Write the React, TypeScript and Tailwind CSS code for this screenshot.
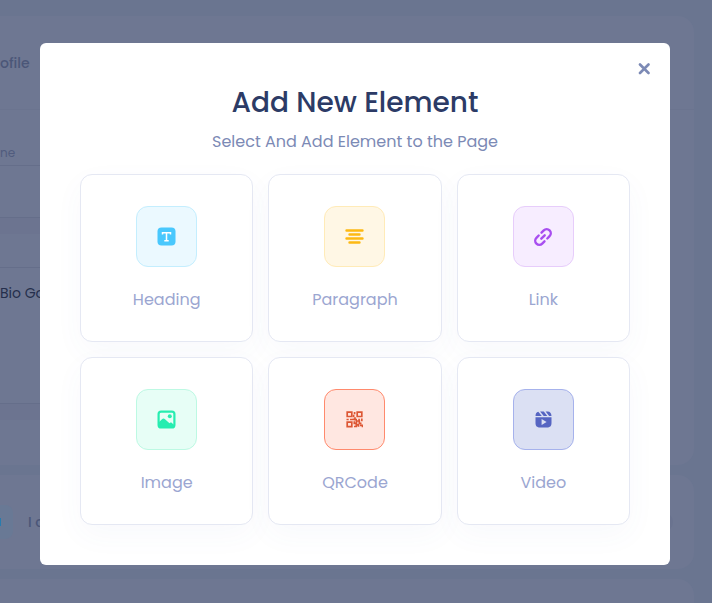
import type { ReactNode } from "react";

type Element = { label: string; box: string; icon: ReactNode };

const elements: Element[] = [
  {
    label: "Heading",
    box: "border-[#c4eefe] bg-[#ebf9ff] text-[#49c8fd]",
    icon: (
      <svg width="19" height="19" viewBox="0 0 19 19" aria-hidden="true">
        <rect x="0.5" y="0.5" width="18" height="18" rx="4" fill="currentColor" />
        <path d="M5.5 7.5V5.7h8v1.8M9.5 5.7v7.8M7.3 13.7h4.4" fill="none" stroke="#fff" strokeWidth="1.5" />
      </svg>
    ),
  },
  {
    label: "Paragraph",
    box: "border-[#ffebb8] bg-[#fff7e5] text-[#fdb913]",
    icon: (
      <svg width="19" height="19" viewBox="0 0 19 19" aria-hidden="true">
        <path d="M1.5 3.5h16M4.5 7.5h10M1.5 11.5h16M4.5 15.5h10" fill="none" stroke="currentColor" strokeWidth="2.4" strokeLinecap="round" />
      </svg>
    ),
  },
  {
    label: "Link",
    box: "border-[#e7cdfb] bg-[#f7edff] text-[#a84ef0]",
    icon: (
      <svg width="20" height="20" viewBox="0 0 20 20" aria-hidden="true">
        <g fill="none" stroke="currentColor" strokeWidth="2.4" strokeLinecap="round" transform="rotate(-45 10 10)">
          <path d="M8 5.9H4.8a4.1 4.1 0 0 0 0 8.2H8M12 5.9h3.2a4.1 4.1 0 0 1 0 8.2H12M7.6 10h4.8" />
        </g>
      </svg>
    ),
  },
  {
    label: "Image",
    box: "border-[#bdf9e3] bg-[#e7fef6] text-[#26edb0]",
    icon: (
      <svg width="19" height="19" viewBox="0 0 19 19" aria-hidden="true">
        <rect x="1.6" y="1.6" width="15.8" height="15.8" rx="2.5" fill="none" stroke="currentColor" strokeWidth="2.2" />
        <circle cx="12.8" cy="6.2" r="2" fill="currentColor" />
        <path d="M1.5 12.5 5 9.2q1.5-1.3 3 0l4.5 4 1.5-1 3.5 3v1.5l-1 1H2.5l-1-1z" fill="currentColor" />
      </svg>
    ),
  },
  {
    label: "QRCode",
    box: "border-[#ff8a6d] bg-[#ffe7e1] text-[#dd5734]",
    icon: (
      <svg width="17" height="17" viewBox="0 0 17 17" aria-hidden="true">
        <g fill="none" stroke="currentColor" strokeWidth="1.7">
          <path d="M1.2 1.2h4.6v4.3H1.2zM11.2 1.2h4.6v4.3h-4.6zM1.2 11.2h4.6v4.5H1.2z" />
          <path d="M8.6 1v2.3M7.6 3.8v2.5M0.5 8.5h2.2M4 8.5h3.5v-1M9 6.2v2.4h2M12.3 8.5h1.6M15.8 7.5v2.7M8.3 10.2v2.2h2.2V10h2.8v2.4h2.2M8 15.5h2.3v-1.6h2.2v1.8M14 14.3h2.5v2" />
        </g>
      </svg>
    ),
  },
  {
    label: "Video",
    box: "border-[#a6b2ec] bg-[#dbe0f3] text-[#5665c2]",
    icon: (
      <svg width="17" height="17" viewBox="0 0 17 17" aria-hidden="true">
        <path d="M0.5 4.9C.6 2.2 1.5 1 3.3.7l3.5 4.2zM5.1.5h3.7l3.5 4.4H8.7zM10.6.5h2.1c2.4.1 3.6 1.6 3.8 4.4h-2.4z" fill="currentColor" />
        <path fillRule="evenodd" d="M.5 6.2h16v5.6c0 3.4-1.4 4.7-4.7 4.7H5.2C1.9 16.5.5 15.2.5 11.8zM6.6 8v6l5-3z" fill="currentColor" />
      </svg>
    ),
  },
];

function PageBehind() {
  return (
    <div aria-hidden="true" className="h-screen overflow-hidden bg-[#6a7590] pt-4 pr-[18px] text-sm">
      <section className="mb-2.5 h-[449px] rounded-r-2xl bg-[#6e7792]">
        <p className="h-[94px] border-b border-[#6b748f] pt-[37px] font-medium text-[#4b5678]">ofile</p>
        <div className="pr-10">
          <p className="h-14 border-b border-[#656e8a] pt-[33px] text-xs leading-5 text-[#515c7e]">ne</p>
          <div className="h-[52px] border-b border-[#656e8a]" />
          <div className="h-4 bg-[#6c7490]" />
          <div className="h-[34px] border-b border-[#656e8a]" />
          <p className="h-[136px] border-b border-[#656e8a] pt-[15px] text-[#252f4c]">Bio Go</p>
          <div className="h-4 bg-[#6c7490]" />
        </div>
      </section>
      <section className="mb-2.5 flex h-[94px] items-center gap-[15px] rounded-r-2xl bg-[#6e7792] text-[#4b5678]">
        <span className="flex h-[34px] w-[13px] items-center rounded-r-lg bg-[#697995]">
          <span className="h-2 w-px bg-[#287cae]" />
        </span>
        <span className="font-medium">I c</span>
        <span className="mr-[21px] ml-auto size-5 rounded-full bg-[#6a738f]" />
      </section>
      <section className="h-24 rounded-r-2xl bg-[#6e7792]" />
    </div>
  );
}

export default function App() {
  return (
    <main className="relative font-['Poppins','Inter',sans-serif]">
      <PageBehind />
      <div className="absolute inset-0 pt-[43px] pr-[42px] pl-10">
        <div
          role="dialog"
          aria-modal="true"
          aria-labelledby="dialog-title"
          className="relative mx-auto max-w-[630px] rounded-md bg-white px-10 pt-[42px] pb-10 text-center"
        >
          <button type="button" aria-label="Close" className="absolute top-4 right-4 flex size-5 items-center justify-center text-[#7c8ab5]">
            <svg width="12" height="12" viewBox="0 0 12 12" aria-hidden="true">
              <path d="m2 1.5 8.5 8.5m0-8.5L2 10" stroke="currentColor" strokeWidth="2.6" strokeLinecap="round" />
            </svg>
          </button>
          <h1 id="dialog-title" className="text-[28px] leading-9 font-medium text-[#2c3b66]">
            Add New Element
          </h1>
          <p className="mt-[9px] text-base leading-6 text-[#7c8ab5]">Select And Add Element to the Page</p>
          <div className="mt-5 grid grid-cols-3 gap-[15px]">
            {elements.map(({ label, box, icon }) => (
              <button
                key={label}
                type="button"
                className="flex flex-col items-center rounded-xl border border-[#e5e8f3] bg-white pt-[31px] pb-[29px] shadow-[0_10px_30px_rgba(85,105,190,0.04)]"
              >
                <span className={`flex size-[61px] items-center justify-center rounded-xl border ${box}`}>{icon}</span>
                <span className="mt-[21px] text-base leading-6 text-[#9ba6d1]">{label}</span>
              </button>
            ))}
          </div>
        </div>
      </div>
    </main>
  );
}
